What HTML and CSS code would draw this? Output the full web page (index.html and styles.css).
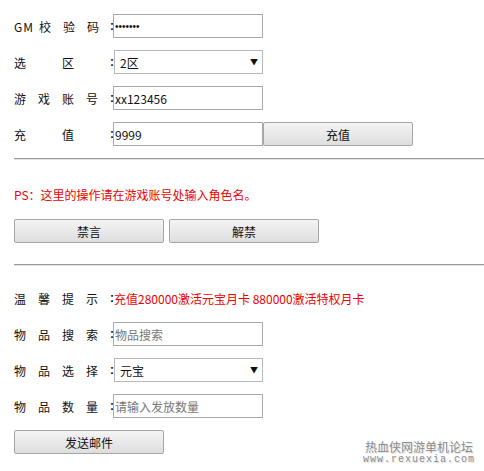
FILE: index.html
```html
<!DOCTYPE html>
<html lang="zh-CN">
<head>
    <meta charset="UTF-8">
    <meta name="viewport" content="width=device-width, initial-scale=1.0">
    <title>GM工具</title>
    <link rel="stylesheet" href="styles.css">
</head>
<body>

    <form id="gmForm" class="panel">
        <div class="row">
            <label class="lbl" for="code"><span class="gm">GM</span>校验码</label><span class="colon">:</span>
            <input type="password" id="code" class="field" value="1234567">
        </div>
        <div class="row">
            <label class="lbl" for="area">选　区</label><span class="colon">:</span>
            <span class="select-wrap">
                <select id="area" class="field">
                    <option>1区</option>
                    <option selected>2区</option>
                    <option>3区</option>
                </select>
            </span>
        </div>
        <div class="row">
            <label class="lbl" for="account">游戏账号</label><span class="colon">:</span>
            <input type="text" id="account" class="field" value="xx123456">
        </div>
        <div class="row">
            <label class="lbl" for="amount">充　值</label><span class="colon">:</span>
            <input type="text" id="amount" class="field" value="9999">
            <button type="button" class="btn">充值</button>
        </div>

        <hr class="line">

        <p class="notice">PS：这里的操作请在游戏账号处输入角色名。</p>
        <div class="row btns">
            <button type="button" class="btn">禁言</button>
            <button type="button" class="btn">解禁</button>
        </div>

        <hr class="line second">

        <div class="row tip-row">
            <span class="lbl">温馨提示</span><span class="colon">:</span>
            <span class="tip">充值280000激活元宝月卡 880000激活特权月卡</span>
        </div>
        <div class="row">
            <label class="lbl" for="search">物品搜索</label><span class="colon">:</span>
            <input type="text" id="search" class="field" placeholder="物品搜索">
        </div>
        <div class="row">
            <label class="lbl" for="item">物品选择</label><span class="colon">:</span>
            <span class="select-wrap">
                <select id="item" class="field">
                    <option selected>元宝</option>
                    <option>金币</option>
                </select>
            </span>
        </div>
        <div class="row">
            <label class="lbl" for="count">物品数量</label><span class="colon">:</span>
            <input type="text" id="count" class="field" placeholder="请输入发放数量">
        </div>
        <div class="row">
            <button type="button" class="btn">发送邮件</button>
        </div>
    </form>

    <div class="watermark">
        <div class="wm-title">热血侠网游单机论坛</div>
        <div class="wm-url">www.rexuexia.com</div>
    </div>

</body>
</html>
```

FILE: styles.css
```css
* {
    box-sizing: border-box;
    margin: 0;
    padding: 0;
}

body {
    font-family: "Noto Sans CJK SC", "Liberation Sans", sans-serif;
    font-size: 12px;
    color: #111;
    background-color: #fff;
    padding: 14px 0 0 14px;
    position: relative;
    height: 471px;
    overflow: hidden;
}

.row {
    display: flex;
    align-items: center;
    height: 24px;
    margin-bottom: 12px;
}

.lbl {
    flex: 0 0 96px;
    width: 96px;
    letter-spacing: 12px;
    white-space: nowrap;
    overflow: hidden;
}

.gm {
    letter-spacing: 1px;
    margin-right: 5px;
}

.colon {
    width: 3px;
    font-weight: bold;
    font-family: "Liberation Sans", sans-serif;
}

.field {
    width: 150px;
    height: 24px;
    border: 1px solid #a9a9a9;
    font-family: inherit;
    font-size: 12px;
    padding: 0 1px;
    color: #111;
    background: #fff;
    outline: none;
}

.field::placeholder {
    color: #777;
}

input[type="password"] {
    font-family: "Liberation Sans", sans-serif;
    font-size: 10px;
    letter-spacing: 0;
}

.select-wrap {
    position: relative;
    display: inline-block;
    height: 24px;
    margin-left: 1px;
}

.select-wrap select {
    width: 149px;
    appearance: none;
    -webkit-appearance: none;
    padding-left: 5px;
    border-color: #b8b8b8;
}

.select-wrap::after {
    content: "\25BC";
    position: absolute;
    right: 5px;
    top: 6px;
    font-size: 8px;
    color: #111;
    pointer-events: none;
}

.btn {
    width: 150px;
    height: 24px;
    border: 1px solid #a6a6a6;
    border-radius: 2px;
    background: linear-gradient(#f4f4f4, #dedede);
    font-family: inherit;
    font-size: 12px;
    color: #111;
    cursor: pointer;
}

.btns {
    gap: 5px;
}

.line {
    border: none;
    border-top: 1px solid #9a9a9a;
    border-bottom: 1px solid #e4e4e4;
}

.notice {
    color: #e00;
    height: 24px;
    line-height: 24px;
    margin: 23px 0 12px;
}

/* margins collapse with the row above, so this is the full gap */
.second {
    margin-top: 21px;
}

.tip-row {
    margin-top: 20px;
}

.tip {
    color: #e00;
    padding-left: 1px;
    white-space: nowrap;
}

.watermark {
    position: absolute;
    right: 9px;
    bottom: 6px;
    text-align: center;
    color: #8a8a8a;
    text-shadow: 0 0 2px #fff, 1px 1px 0 #ddd;
}

.wm-title {
    font-size: 12px;
    letter-spacing: 0;
    line-height: 16px;
}

.wm-url {
    font-family: "Liberation Mono", monospace;
    font-size: 10px;
    line-height: 10px;
    letter-spacing: 1px;
}
```
